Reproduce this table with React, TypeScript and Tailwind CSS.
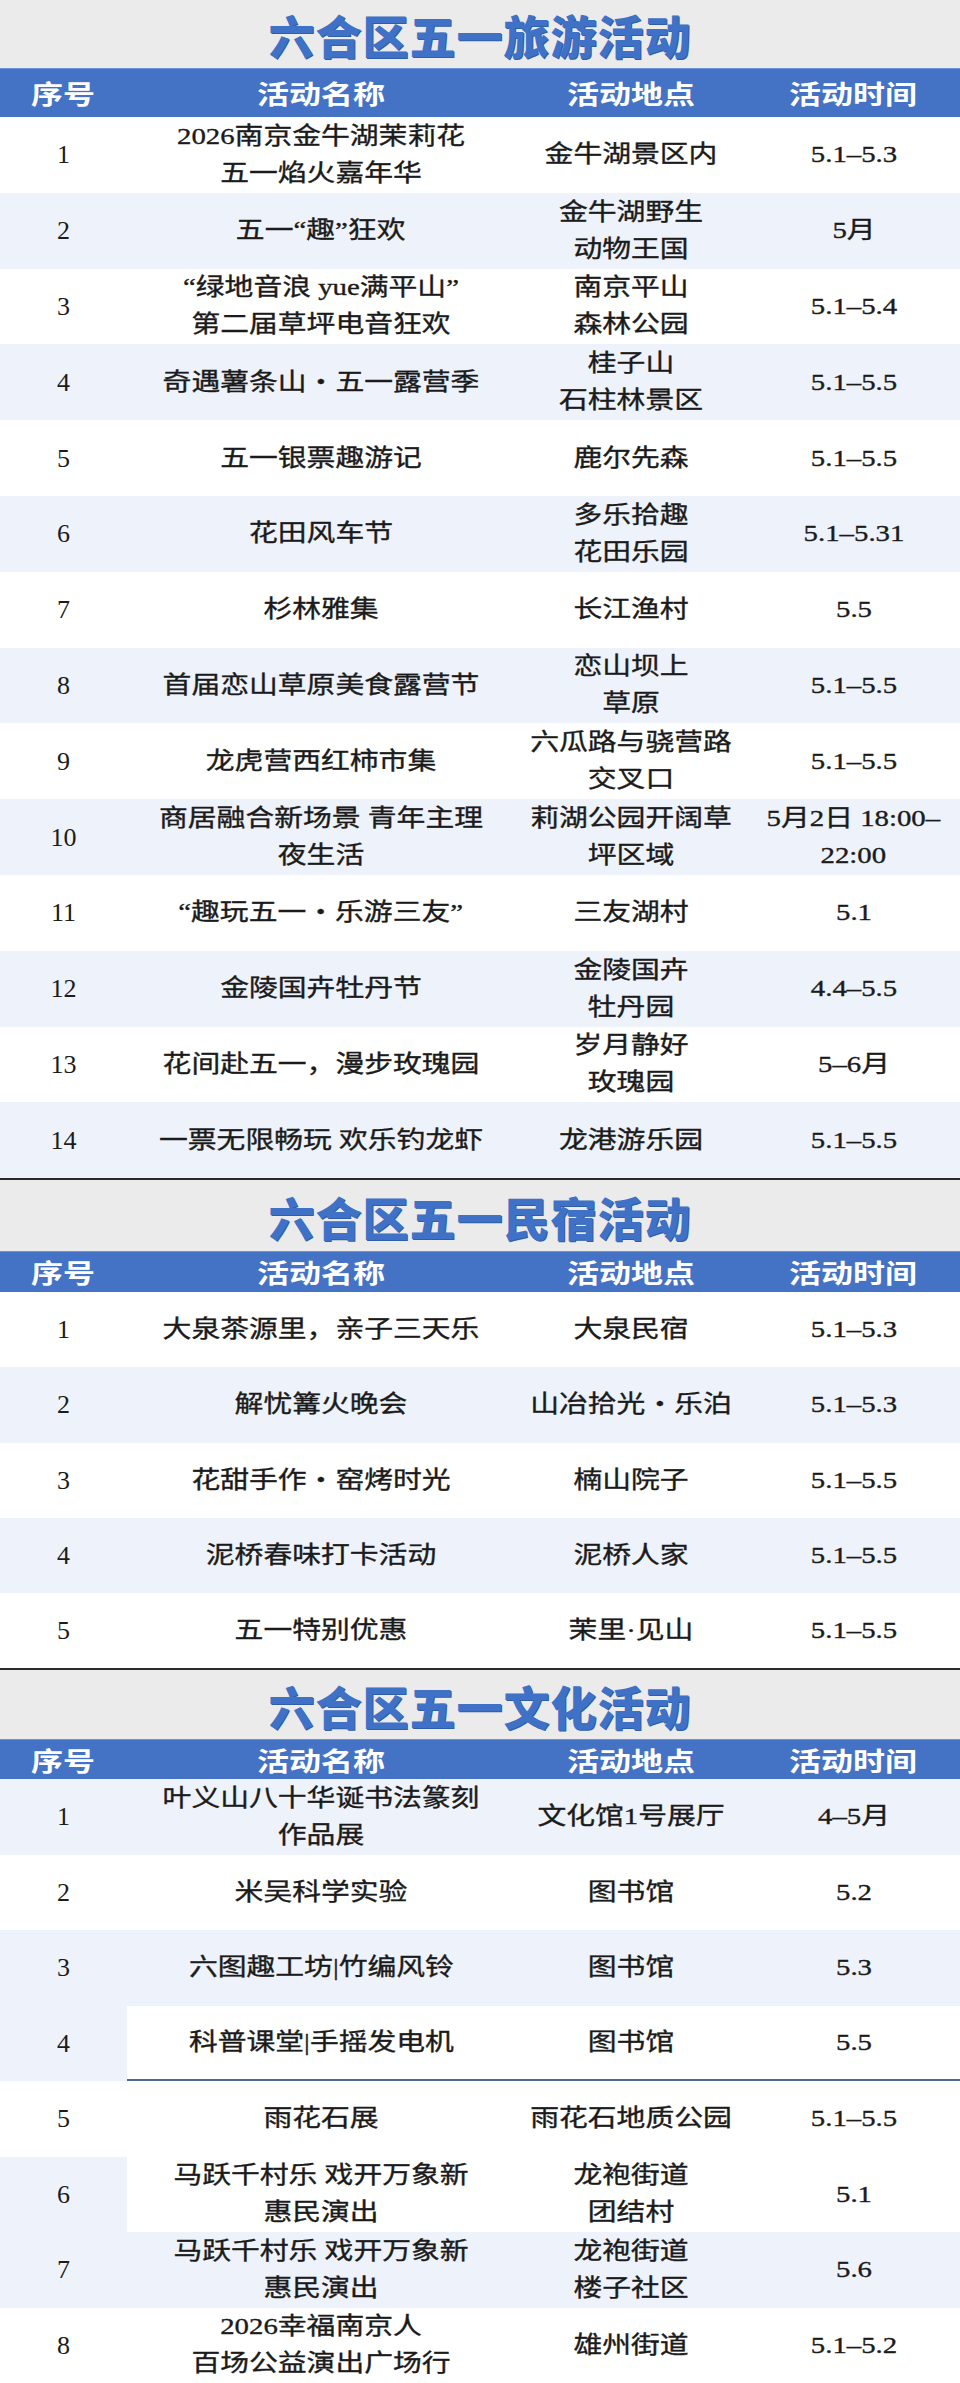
type Bg = "w" | "b" | "s";

type Row = {
  n: string;
  name: string[];
  place: string[];
  time: string[];
  bg?: Bg;
  line?: boolean;
};

const travel: Row[] = [
  { n: "1", name: ["2026南京金牛湖茉莉花", "五一焰火嘉年华"], place: ["金牛湖景区内"], time: ["5.1–5.3"] },
  { n: "2", name: ["五一“趣”狂欢"], place: ["金牛湖野生", "动物王国"], time: ["5月"] },
  { n: "3", name: ["“绿地音浪 yue满平山”", "第二届草坪电音狂欢"], place: ["南京平山", "森林公园"], time: ["5.1–5.4"] },
  { n: "4", name: ["奇遇薯条山・五一露营季"], place: ["桂子山", "石柱林景区"], time: ["5.1–5.5"] },
  { n: "5", name: ["五一银票趣游记"], place: ["鹿尔先森"], time: ["5.1–5.5"] },
  { n: "6", name: ["花田风车节"], place: ["多乐拾趣", "花田乐园"], time: ["5.1–5.31"] },
  { n: "7", name: ["杉林雅集"], place: ["长江渔村"], time: ["5.5"] },
  { n: "8", name: ["首届恋山草原美食露营节"], place: ["恋山坝上", "草原"], time: ["5.1–5.5"] },
  { n: "9", name: ["龙虎营西红柿市集"], place: ["六瓜路与骁营路", "交叉口"], time: ["5.1–5.5"] },
  { n: "10", name: ["商居融合新场景 青年主理", "夜生活"], place: ["莉湖公园开阔草", "坪区域"], time: ["5月2日 18:00–", "22:00"] },
  { n: "11", name: ["“趣玩五一・乐游三友”"], place: ["三友湖村"], time: ["5.1"] },
  { n: "12", name: ["金陵国卉牡丹节"], place: ["金陵国卉", "牡丹园"], time: ["4.4–5.5"] },
  { n: "13", name: ["花间赴五一，漫步玫瑰园"], place: ["岁月静好", "玫瑰园"], time: ["5–6月"] },
  { n: "14", name: ["一票无限畅玩 欢乐钓龙虾"], place: ["龙港游乐园"], time: ["5.1–5.5"] },
];

const stay: Row[] = [
  { n: "1", name: ["大泉茶源里，亲子三天乐"], place: ["大泉民宿"], time: ["5.1–5.3"] },
  { n: "2", name: ["解忧篝火晚会"], place: ["山冶拾光・乐泊"], time: ["5.1–5.3"] },
  { n: "3", name: ["花甜手作・窑烤时光"], place: ["楠山院子"], time: ["5.1–5.5"] },
  { n: "4", name: ["泥桥春味打卡活动"], place: ["泥桥人家"], time: ["5.1–5.5"] },
  { n: "5", name: ["五一特别优惠"], place: ["茉里·见山"], time: ["5.1–5.5"] },
];

const culture: Row[] = [
  { n: "1", name: ["叶义山八十华诞书法篆刻", "作品展"], place: ["文化馆1号展厅"], time: ["4–5月"], bg: "b" },
  { n: "2", name: ["米吴科学实验"], place: ["图书馆"], time: ["5.2"], bg: "w" },
  { n: "3", name: ["六图趣工坊|竹编风铃"], place: ["图书馆"], time: ["5.3"], bg: "b" },
  { n: "4", name: ["科普课堂|手摇发电机"], place: ["图书馆"], time: ["5.5"], bg: "s", line: true },
  { n: "5", name: ["雨花石展"], place: ["雨花石地质公园"], time: ["5.1–5.5"], bg: "w" },
  { n: "6", name: ["马跃千村乐 戏开万象新", "惠民演出"], place: ["龙袍街道", "团结村"], time: ["5.1"], bg: "s" },
  { n: "7", name: ["马跃千村乐 戏开万象新", "惠民演出"], place: ["龙袍街道", "楼子社区"], time: ["5.6"], bg: "b" },
  { n: "8", name: ["2026幸福南京人", "百场公益演出广场行"], place: ["雄州街道"], time: ["5.1–5.2"], bg: "w" },
];

const BLUE = "bg-[#eef2fa]";
const COLS = "grid grid-cols-[127px_388px_232px_213px]";

// 每行文字单独一个 span，横向拉宽，和原图的扁宽字形对齐
function Cell({ lines, className }: { lines: string[]; className: string }) {
  return (
    <div className={`flex flex-col items-center justify-center ${className}`}>
      {lines.map((l, i) => (
        <span
          key={i}
          className="block whitespace-nowrap leading-[37px] scale-x-[1.2] [-webkit-text-stroke:0.35px_#1b1b1b]"
        >
          {l}
        </span>
      ))}
    </div>
  );
}

function Table({
  title,
  titleH,
  headH,
  rowH,
  rows,
}: {
  title: string;
  titleH: string;
  headH: string;
  rowH: string;
  rows: Row[];
}) {
  return (
    <section>
      <div className={`flex items-center justify-center bg-[#ebebeb] ${titleH}`}>
        <h1 className="font-['Noto_Sans_CJK_SC',sans-serif] text-[46px] font-black leading-none tracking-[1px] text-[#3f72c6] [text-shadow:1px_1px_0_#2f5ea8]">
          {title}
        </h1>
      </div>
      <div
        className={`${COLS} items-center border-t border-[#6b93d6] bg-[#4472c4] font-['Noto_Sans_CJK_SC',sans-serif] text-[26px] font-bold text-white ${headH}`}
      >
        {["序号", "活动名称", "活动地点", "活动时间"].map((h) => (
          <div key={h} className="flex justify-center">
            <span className="block scale-x-[1.23] leading-none">{h}</span>
          </div>
        ))}
      </div>
      {rows.map((r, i) => {
        const bg: Bg = r.bg ?? (i % 2 === 1 ? "b" : "w");
        const first = bg === "w" ? "bg-white" : BLUE;
        const rest = bg === "b" ? BLUE : "bg-white";
        const line = r.line ? "border-b-2 border-[#4d6a8e]" : "";
        return (
          <div key={r.n} className={`${COLS} text-[24px] text-[#1b1b1b] ${rowH}`}>
            <div className={`flex items-center justify-center text-[26px] ${first}`}>{r.n}</div>
            <Cell lines={r.name} className={`${rest} ${line}`} />
            <Cell lines={r.place} className={`${rest} ${line}`} />
            <Cell lines={r.time} className={`${rest} ${line}`} />
          </div>
        );
      })}
    </section>
  );
}

export default function App() {
  return (
    <div className="w-[960px] bg-white font-['Liberation_Serif','Noto_Sans_CJK_SC',serif]">
      <Table title="六合区五一旅游活动" titleH="h-[68px]" headH="h-[49px]" rowH="h-[75.8px]" rows={travel} />
      <div className="h-[2px] bg-[#2a2a2a]" />
      <Table title="六合区五一民宿活动" titleH="h-[71px]" headH="h-[41px]" rowH="h-[75.2px]" rows={stay} />
      <div className="h-[2px] bg-[#2a2a2a]" />
      <Table title="六合区五一文化活动" titleH="h-[69px]" headH="h-[40px]" rowH="h-[75.5px]" rows={culture} />
    </div>
  );
}
